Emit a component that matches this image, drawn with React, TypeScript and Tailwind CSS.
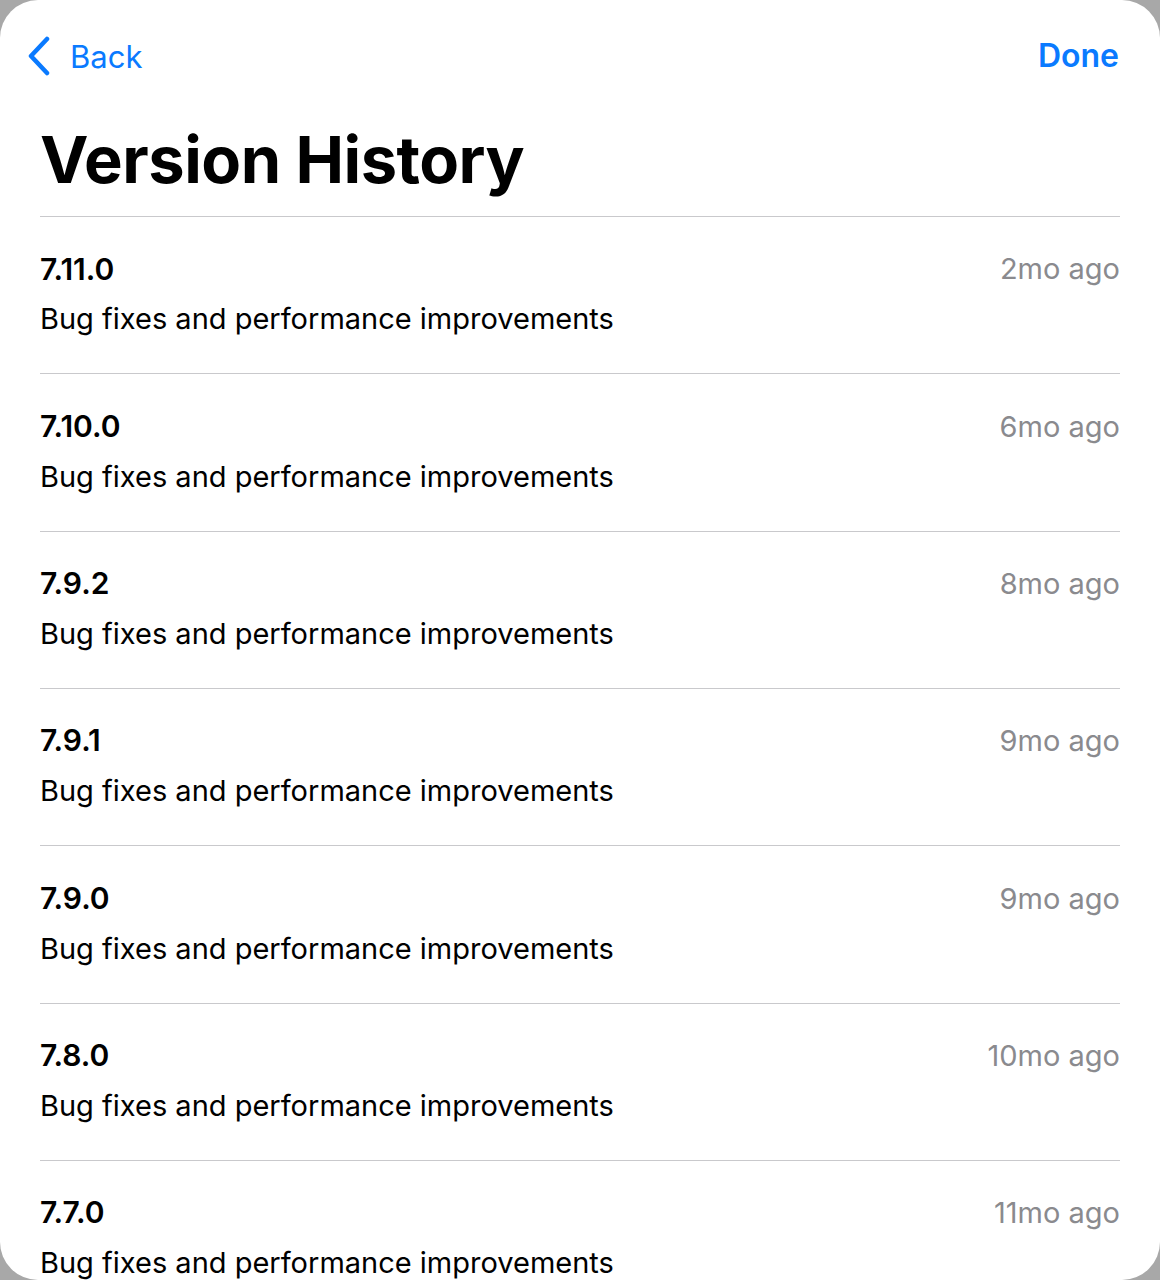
import React from "react";

const rows = [
  { v: "7.11.0", t: "2mo ago" },
  { v: "7.10.0", t: "6mo ago" },
  { v: "7.9.2", t: "8mo ago" },
  { v: "7.9.1", t: "9mo ago" },
  { v: "7.9.0", t: "9mo ago" },
  { v: "7.8.0", t: "10mo ago" },
  { v: "7.7.0", t: "11mo ago" },
];

export default function App() {
  return (
    <div className="w-[1160px] h-[1280px] bg-[#a8a8a8] overflow-hidden" style={{ fontFamily: "Inter, 'Noto Sans', sans-serif" }}>
      <div className="w-full h-full bg-white rounded-[38px] overflow-hidden">
        <div className="flex items-center justify-between h-[112px] pl-[26px] pr-[41px]">
          <div className="flex items-center gap-[18px] text-[#0a7aff]">
            <svg width="26" height="40" viewBox="0 0 26 40" fill="none">
              <path d="M21 3 L5 20 L21 37" stroke="#0a7aff" strokeWidth="4.5" strokeLinecap="round" strokeLinejoin="round" />
            </svg>
            <span className="text-[31px] leading-none">Back</span>
          </div>
          <span className="text-[32px] leading-none font-semibold text-[#0a7aff]">Done</span>
        </div>
        <div className="px-[40px]">
          <h1 className="text-[65px] leading-[80px] font-bold tracking-[-0.5px] text-black mt-[8px] pb-[16px] border-b border-[#c9c9cc]">
            Version History
          </h1>
          {rows.map((r) => (
            <div key={r.v} className="border-b border-[#c9c9cc] pt-[35px] pb-[37.33px]">
              <div className="flex items-center justify-between h-[34px]">
                <span className="text-[30px] font-semibold text-black">{r.v}</span>
                <span className="text-[29px] text-[#8a8a8e]">{r.t}</span>
              </div>
              <div className="mt-[16px] h-[34px] flex items-center text-[29px] text-black">
                Bug fixes and performance improvements
              </div>
            </div>
          ))}
        </div>
      </div>
    </div>
  );
}
